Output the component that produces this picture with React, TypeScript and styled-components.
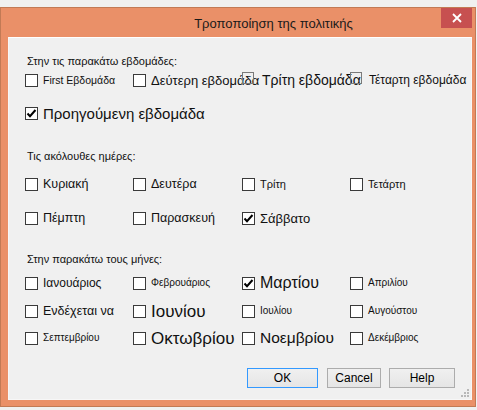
import React from 'react';
import styled, { createGlobalStyle } from 'styled-components';

const Global = createGlobalStyle`
  html, body { margin: 0; padding: 0; background: #f0f0f0; }
  body { width: 477px; height: 410px; overflow: hidden; font-family: "Liberation Sans", Arial, sans-serif; color: #111; }
`;

const Page = styled.div`
  padding-top: 7px;
  width: 477px;
  height: 410px;
  box-sizing: border-box;
`;

const Window = styled.div`
  width: 476px;
  height: 400px;
  box-sizing: border-box;
  background: #ea9068;
  border: 1px solid #c27a55;
  display: flex;
  flex-direction: column;
`;

const TitleBar = styled.div`
  height: 29px;
  display: flex;
  align-items: flex-start;
  flex-shrink: 0;
`;

const Title = styled.div`
  flex: 1;
  text-align: center;
  padding-left: 105px;
  padding-top: 8px;
  font-family: "Liberation Sans", Arial, sans-serif;
  font-size: 13px;
  color: #1a1a1a;
  white-space: nowrap;
`;

const CloseButton = styled.div`
  width: 31px;
  height: 20px;
  margin-right: 3px;
  background: #c75050;
  display: flex;
  align-items: center;
  justify-content: center;
`;

const Client = styled.div`
  position: relative;
  flex: 1;
  margin: 0 3px 6px 7px;
  background: #f0f0f0;
  border: 1px solid #f7f7f7;
  border-top-color: #ffffff;
  padding: 0 16px 0 16px;
  display: flex;
  flex-direction: column;
`;

const SectionLabel = styled.div<{ $top: number }>`
  margin-top: ${p => p.$top}px;
  height: 14px;
  line-height: 14px;
  padding-left: 2px;
  font-size: 11px;
  color: #111;
  white-space: nowrap;
`;

const Row = styled.div<{ $top: number }>`
  margin-top: ${p => p.$top}px;
  height: 24px;
  display: grid;
  grid-template-columns: 108px 109px 108px 1fr;
  align-items: center;
`;

const Option = styled.div`
  display: flex;
  align-items: center;
  white-space: nowrap;
  min-width: 0;
`;

const Box = styled.span<{ $ghost?: boolean }>`
  position: relative;
  flex-shrink: 0;
  width: ${p => (p.$ghost ? 12 : 13)}px;
  height: ${p => (p.$ghost ? 12 : 13)}px;
  box-sizing: border-box;
  border: 1px solid ${p => (p.$ghost ? '#7a7a7a' : '#3a3a3a')};
  background: ${p => (p.$ghost ? 'transparent' : '#ffffff')};
  margin-top: ${p => (p.$ghost ? -4 : 0)}px;
  display: flex;
  align-items: center;
  justify-content: center;
`;

const Text = styled.span<{ $size: number; $gap?: number }>`
  font-size: ${p => p.$size}px;
  margin-left: ${p => p.$gap ?? 5}px;
  color: #111;
  line-height: 1;
`;

const ButtonRow = styled.div`
  margin-top: 18px;
  display: flex;
  justify-content: flex-end;
  gap: 8px;
`;

const Button = styled.div<{ $w: number; $primary?: boolean }>`
  width: ${p => p.$w}px;
  height: 20px;
  box-sizing: border-box;
  border: 1px solid ${p => (p.$primary ? '#3399ff' : '#acacac')};
  background: linear-gradient(#f0f0f0, #e5e5e5);
  display: flex;
  align-items: center;
  justify-content: center;
  font-size: 12px;
  color: #000;
  &:first-child { margin-right: 1px; }
`;

const Grip = styled.svg`
  position: absolute;
  right: 2px;
  bottom: 2px;
`;

const Check = () => (
  <svg width="11" height="11" viewBox="0 0 11 11">
    <path d="M1.5 5.5 L4 8.2 L9.5 2" fill="none" stroke="#000" strokeWidth="2" />
  </svg>
);

type Item = { label: string; size: number; checked?: boolean; ghost?: boolean; gap?: number };

const Opt = ({ label, size, checked, ghost, gap }: Item) => (
  <Option>
    <Box $ghost={ghost}>{checked && <Check />}</Box>
    <Text $size={size} $gap={gap}>{label}</Text>
  </Option>
);

const weeks: Item[] = [
  { label: 'First Εβδομάδα', size: 10.5 },
  { label: 'Δεύτερη εβδομάδα', size: 13 },
  { label: 'Τρίτη εβδομάδα', size: 14, ghost: true, gap: 8 },
  { label: 'Τέταρτη εβδομάδα', size: 12, ghost: true, gap: 7 },
];

const days1: Item[] = [
  { label: 'Κυριακή', size: 12.5 },
  { label: 'Δευτέρα', size: 12.5 },
  { label: 'Τρίτη', size: 11 },
  { label: 'Τετάρτη', size: 11 },
];

const days2: Item[] = [
  { label: 'Πέμπτη', size: 12.5 },
  { label: 'Παρασκευή', size: 12.5 },
  { label: 'Σάββατο', size: 13, checked: true },
];

const months1: Item[] = [
  { label: 'Ιανουάριος', size: 12 },
  { label: 'Φεβρουάριος', size: 10 },
  { label: 'Μαρτίου', size: 16, checked: true },
  { label: 'Απριλίου', size: 10 },
];
const months2: Item[] = [
  { label: 'Ενδέχεται να', size: 12.5 },
  { label: 'Ιουνίου', size: 17 },
  { label: 'Ιουλίου', size: 10 },
  { label: 'Αυγούστου', size: 10 },
];
const months3: Item[] = [
  { label: 'Σεπτεμβρίου', size: 10 },
  { label: 'Οκτωβρίου', size: 17 },
  { label: 'Νοεμβρίου', size: 15.5 },
  { label: 'Δεκέμβριος', size: 10 },
];

const renderRow = (items: Item[], top: number) => (
  <Row $top={top}>
    {items.map(i => (
      <Opt key={i.label} {...i} />
    ))}
  </Row>
);

export default function App() {
  return (
    <>
      <Global />
      <Page>
        <Window>
          <TitleBar>
            <Title>Τροποποίηση της πολιτικής</Title>
            <CloseButton>
              <svg width="10" height="10" viewBox="0 0 10 10">
                <path d="M1 1 L9 9 M9 1 L1 9" stroke="#fff" strokeWidth="1.8" />
              </svg>
            </CloseButton>
          </TitleBar>
          <Client>
            <SectionLabel $top={16}>Στην τις παρακάτω εβδομάδες:</SectionLabel>
            {renderRow(weeks, 0)}
            <Row $top={9}>
              <Opt label="Προηγούμενη εβδομάδα" size={15} checked />
            </Row>
            <SectionLabel $top={24}>Τις ακόλουθες ημέρες:</SectionLabel>
            {renderRow(days1, 9)}
            {renderRow(days2, 10)}
            <SectionLabel $top={22}>Στην παρακάτω τους μήνες:</SectionLabel>
            {renderRow(months1, 5)}
            {renderRow(months2, 4)}
            {renderRow(months3, 3)}
            <ButtonRow>
              <Button $w={71} $primary>OK</Button>
              <Button $w={54}>Cancel</Button>
              <Button $w={66}>Help</Button>
            </ButtonRow>
            <Grip width="8" height="8" viewBox="0 0 8 8">
              <rect x="6" y="0" width="2" height="2" fill="#b8b8b8" />
              <rect x="3" y="3" width="2" height="2" fill="#b8b8b8" />
              <rect x="6" y="3" width="2" height="2" fill="#b8b8b8" />
              <rect x="0" y="6" width="2" height="2" fill="#b8b8b8" />
              <rect x="3" y="6" width="2" height="2" fill="#b8b8b8" />
              <rect x="6" y="6" width="2" height="2" fill="#b8b8b8" />
            </Grip>
          </Client>
        </Window>
      </Page>
    </>
  );
}
